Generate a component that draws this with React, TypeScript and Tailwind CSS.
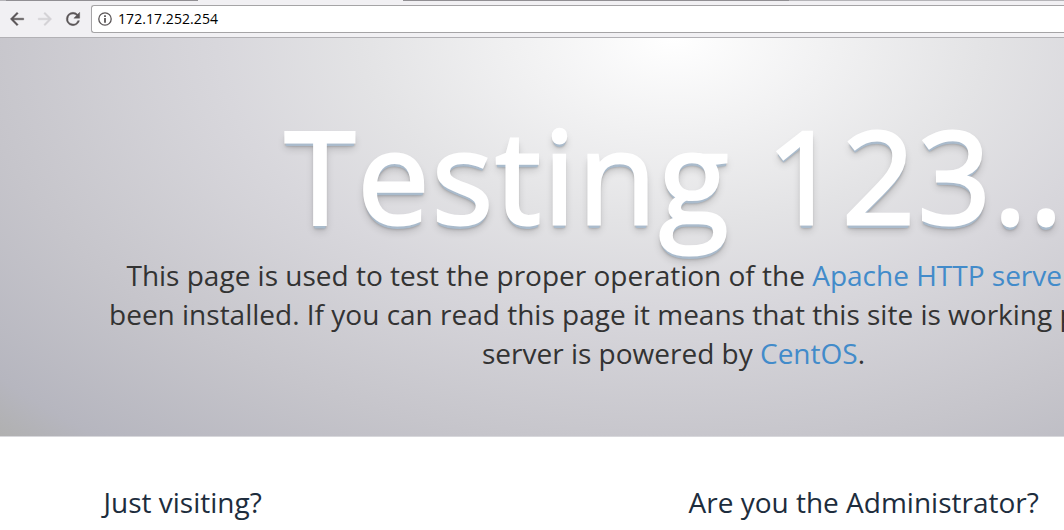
import React from 'react';

const columns = [
  { id: "visitor", title: "Just visiting?" },
  { id: "admin", title: "Are you the Administrator?" },
];

function Toolbar() {
  return (
    <header className="h-[38px] bg-[#f1f0f3] border-b border-[#b2b1b5] flex flex-col">
      <div className="h-px flex">
        <div className="w-[6px] bg-[#b5b4b8]"></div>
        <div className="w-[192px] bg-[#918f93]"></div>
        <div className="w-[205px]"></div>
        <div className="w-[386px] bg-[#918f93]"></div>
        <div className="flex-1 bg-[#b5b4b8]"></div>
      </div>
      <div className="flex items-center h-[36px]">
        <div className="flex items-center gap-2 pl-[7px] w-[91px]">
          <svg viewBox="0 0 24 24" className="w-5 h-5 shrink-0 fill-[#5a5557]">
            <path d="M20 11H7.83l5.59-5.59L12 4l-8 8 8 8 1.41-1.41L7.83 13H20v-2z" stroke="#5a5557" strokeWidth="0.5" />
          </svg>
          <svg viewBox="0 0 24 24" className="w-5 h-5 shrink-0 fill-[#d3d2d5]">
            <path d="M12 4l-1.41 1.41L16.17 11H4v2h12.17l-5.58 5.59L12 20l8-8z" stroke="#d3d2d5" strokeWidth="0.5" />
          </svg>
          <svg viewBox="0 0 24 24" className="w-5 h-5 shrink-0 fill-[#5a5557]">
            <path d="M17.65 6.35A7.96 7.96 0 0 0 12 4a8 8 0 1 0 7.73 10h-2.08A6 6 0 1 1 12 6c1.66 0 3.14.69 4.22 1.78L13 11h7V4l-2.35 2.35z" stroke="#5a5557" strokeWidth="0.5" />
          </svg>
        </div>
        <div className="flex-1 h-7 bg-white border border-r-0 border-[#a5a4a6] rounded-l-[3px] flex items-center pl-[6px] gap-[6px]">
          <svg viewBox="0 0 14 14" className="w-[14px] h-[14px] shrink-0">
            <circle cx="7" cy="7" r="6.2" fill="none" stroke="#5a5557" strokeWidth="1.3" />
            <path d="M6.1 3.2h1.8v1.7H6.1zM6.1 6h1.8v4.8H6.1z" fill="#5a5557" />
          </svg>
          <span className="font-['Open_Sans',sans-serif] text-[14px] leading-none tracking-[0.07px] text-black">172.17.252.254</span>
        </div>
      </div>
    </header>
  );
}

export default function App() {
  return (
    <main className="w-[1064px] h-[530px] overflow-hidden bg-white font-['Open_Sans',sans-serif]">
      <Toolbar />
      {/* page is wider than the window, the right side is cut off */}
      <div className="w-[1347px]">
        <section className="h-[399px] border-b border-[#d8d8dc] bg-[radial-gradient(ellipse_at_50%_0%,#ffffff_0%,#e3e3e5_33%,#d8d7dc_48%,#c6c5cb_73%,#b6b6bf_93%,#b0b0b0_100%)] text-center pt-[65px]">
          {/* the stroke thickens the regular weight, the shadows start below its edge */}
          <h1 className="h-[143px] pl-[3px] text-[128px] leading-[143px] tracking-[2.4px] text-white [-webkit-text-stroke:3px_white] [text-shadow:0_2px_0_#abc,0_3px_0_#abc,0_3.5px_0_#abc,0_4px_3px_rgba(0,0,0,0.3),0_6px_9px_rgba(0,0,0,0.2)]">
            Testing 123..
          </h1>
          <p className="w-[1170px] mx-auto mt-[10px] text-[28px] leading-[39px] text-[#333]">
            This page is used to test the proper operation of the <a className="text-[#428bca]">Apache HTTP server</a> after it has<br />
            been installed. If you can read this page it means that this site is working properly. This<br />
            server is powered by <a className="text-[#428bca]">CentOS</a>.
          </p>
        </section>
        <section className="w-[1170px] mx-auto grid grid-cols-2 pt-[45px]">
          {columns.map((col) => (
            <h2 key={col.id} className="px-[15px] text-[28px] leading-[40px] text-[#1d2d3d]">
              {col.title}
            </h2>
          ))}
        </section>
      </div>
    </main>
  );
}
